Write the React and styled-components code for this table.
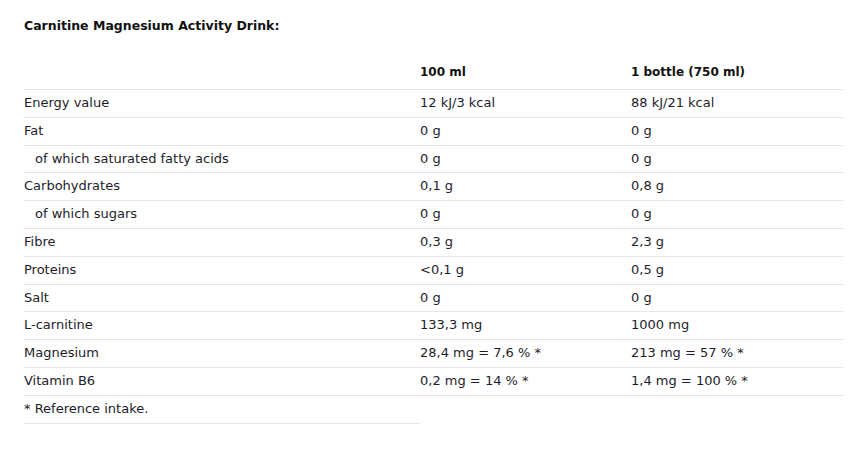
import React from "react";
import styled, { createGlobalStyle } from "styled-components";

const Global = createGlobalStyle`
  html, body { margin: 0; padding: 0; background: #fff; }
  body { font-family: "DejaVu Sans", "Liberation Sans", sans-serif; color: #1d1d2a; }
`;

const Page = styled.div`
  padding: 16px 24px 0 24px;
  width: 819px;
`;

const Title = styled.h3`
  margin: 0 0 23px 0;
  font-size: 12.5px;
  line-height: 19px;
  font-weight: 700;
  color: #111;
`;

const Table = styled.table`
  width: 819px;
  border-collapse: collapse;
  table-layout: fixed;
  font-size: 13px;
`;

const Cell = styled.td`
  padding: 4px 0 4px ${(p) => (p.$indent ? "11px" : "0")};
  line-height: 18.8px;
  border-bottom: 1px solid #e6e6e6;
  text-align: left;
  vertical-align: middle;
  white-space: nowrap;
`;

const Head = styled.th`
  padding: 5px 0 7px 0;
  line-height: 19px;
  font-weight: 700;
  font-size: 12px;
  color: #111;
  text-align: left;
  border-bottom: 1px solid #e6e6e6;
`;

const rows = [
  ["Energy value", "12 kJ/3 kcal", "88 kJ/21 kcal"],
  ["Fat", "0 g", "0 g"],
  ["of which saturated fatty acids", "0 g", "0 g", true],
  ["Carbohydrates", "0,1 g", "0,8 g"],
  ["of which sugars", "0 g", "0 g", true],
  ["Fibre", "0,3 g", "2,3 g"],
  ["Proteins", "<0,1 g", "0,5 g"],
  ["Salt", "0 g", "0 g"],
  ["L-carnitine", "133,3 mg", "1000 mg"],
  ["Magnesium", "28,4 mg = 7,6 % *", "213 mg = 57 % *"],
  ["Vitamin B6", "0,2 mg = 14 % *", "1,4 mg = 100 % *"],
];

export default function App() {
  return (
    <Page>
      <Global />
      <Title>Carnitine Magnesium Activity Drink:</Title>
      <Table>
        <colgroup>
          <col style={{ width: "396px" }} />
          <col style={{ width: "211px" }} />
          <col />
        </colgroup>
        <thead>
          <tr>
            <Head />
            <Head>100 ml</Head>
            <Head>1 bottle (750 ml)</Head>
          </tr>
        </thead>
        <tbody>
          {rows.map(([a, b, c, indent]) => (
            <tr key={a}>
              <Cell $indent={indent}>{a}</Cell>
              <Cell>{b}</Cell>
              <Cell>{c}</Cell>
            </tr>
          ))}
          <tr>
            <Cell>* Reference intake.</Cell>
          </tr>
        </tbody>
      </Table>
    </Page>
  );
}
